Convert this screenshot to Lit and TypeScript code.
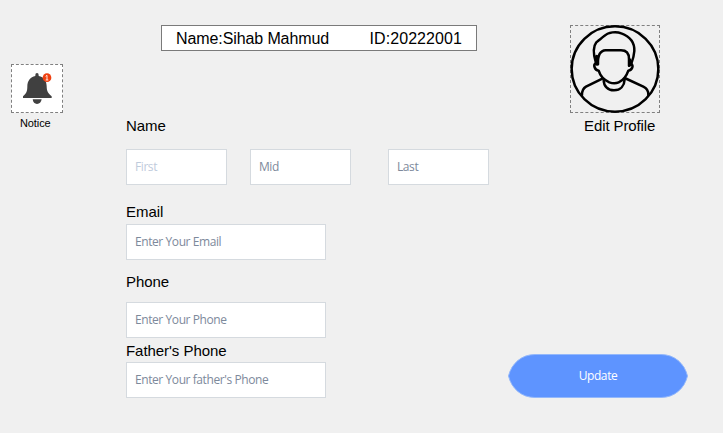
import { LitElement, html, css, svg } from "lit";
import { customElement, property } from "lit/decorators.js";

@customElement("text-field")
class TextField extends LitElement {
  @property() hint = "";

  static styles = css`
    :host {
      display: block;
      height: 36px;
    }
    .input {
      display: block;
      box-sizing: border-box;
      width: 100%;
      height: 36px;
      margin: 0;
      padding: 0 8px 1px;
      border: 1px solid #d5dadf;
      border-radius: 0;
      outline: 0;
      background: #fff;
      font: 12px "Open Sans", "Noto Sans", sans-serif;
      letter-spacing: -0.42px;
    }
    .input::placeholder {
      color: var(--hint-color, #7d899b);
      opacity: 1;
    }
  `;

  render() {
    return html`<input class="input" placeholder=${this.hint} aria-label=${this.hint} />`;
  }
}

const bell = svg`
  <path fill="#404040" d="M106 60 Q106 54 111 54 Q116 54 116 60 L116 63 C132 66 140 78 140 94 C140 110 145 116 155 124 L155 129 L69 129 L69 124 C79 116 82 110 82 94 C82 78 91 66 106 63 Z"/>
  <path fill="#404040" d="M98 133 H125 C123 142 119 147 111 147 C104 147 99 142 98 133 Z"/>
  <circle cx="141" cy="68" r="13" fill="#f04010"/>
  <path d="M137 64 L141 61 V75 M137 75 H145" fill="none" stroke="#fff" stroke-width="2.6"/>`;

const avatar = svg`
  <g fill="none" stroke="#000" stroke-width="7.5" stroke-linecap="round" stroke-linejoin="round">
    <ellipse cx="165" cy="162" rx="130" ry="128"/>
    <path d="M114 148 C113 125 117 107 137 106 H183 C201 106 207 116 207 132 V152"/>
    <path d="M108 144 C99 116 98 96 109 82 C118 74 123 71 130 65 C146 50 169 49 184 55 C211 65 224 84 223 108 C222 125 217 138 213 149"/>
    <path d="M108 144 C98 149 104 165 116 167 C121 184 134 196 148 202 C159 206 167 206 176 202 C190 196 200 182 205 167 C217 165 222 150 213 147"/>
    <path d="M110 124 V147" stroke-width="10"/>
    <path d="M209 135 V150" stroke-width="10"/>
    <path d="M127 191 L78 215 C69 220 66 226 66 240"/>
    <path d="M194 189 L250 215 C262 221 266 228 265 240"/>
    <path d="M131 194 C131 213 143 226 162 226 C182 226 193 212 194 193"/>
  </g>`;

@customElement("app-root")
class AppRoot extends LitElement {
  static styles = css`
    :host {
      display: grid;
      grid-template-columns: 126px 363px 1fr;
      box-sizing: border-box;
      width: 723px;
      height: 433px;
      overflow: hidden;
      background: #f0f0f0;
      color: #000;
      font: 15px/18px "Liberation Sans", Arial, sans-serif;
    }
    .notice {
      padding: 64px 0 0 11px;
      font-size: 11px;
    }
    .frame {
      display: block;
      box-sizing: border-box;
      border: 1px dashed #808080;
    }
    .frame svg {
      display: block;
      margin: -1px;
    }
    .notice .frame {
      width: 52px;
      height: 49px;
      background: #fff;
    }
    .caption {
      display: block;
      white-space: nowrap;
    }
    .notice .caption {
      margin: 1px 0 0 9px;
      letter-spacing: -0.1px;
    }
    .form {
      padding-top: 25px;
    }
    .identity {
      display: flex;
      justify-content: space-between;
      box-sizing: border-box;
      width: 316px;
      height: 26px;
      margin-left: 35px;
      padding: 0 14px;
      border: 1px solid #7a7a7a;
      background: #fff;
      font-size: 16px;
      line-height: 25px;
      white-space: nowrap;
    }
    .identity .name { letter-spacing: -0.1px; }
    .identity .number { letter-spacing: 0.08px; }
    .label {
      display: block;
      height: 18px;
      letter-spacing: -0.05px;
    }
    .first-label { margin: 66px 0 14px; }
    .names {
      display: grid;
      grid-template-columns: 101px 101px 101px;
      column-gap: 23px;
    }
    .names .last { margin-left: 14px; width: 101px; }
    .disabled { --hint-color: #bfcbdc; }
    .wide { width: 200px; }
    .email-label { margin: 18px 0 3px; }
    .phone-label { margin: 13px 0 11px; }
    .father-label { margin: 4px 0 2px; }
    .side {
      display: flex;
      flex-direction: column;
      padding: 25px 0 0 19px;
    }
    .profile { margin-left: 62px; }
    .profile .frame {
      width: 90px;
      height: 88px;
    }
    .profile .caption {
      margin: 4px 0 0 14px;
      letter-spacing: -0.1px;
    }
    .update {
      display: grid;
      width: 180px;
      height: 44px;
      margin-top: 219px;
      padding: 0;
      border: 0;
      background: none;
      color: #fff;
      font: 12px "Open Sans", "Noto Sans", sans-serif;
      letter-spacing: -0.4px;
      place-items: center;
    }
    .update > * { grid-area: 1 / 1; }
    .update .text { margin-bottom: 1px; z-index: 1; }
  `;

  render() {
    return html`
      <div class="notice">
        <div class="frame"><svg width="52" height="49" viewBox="33 27 156 147">${bell}</svg></div>
        <span class="caption">Notice</span>
      </div>
      <div class="form">
        <div class="identity">
          <span class="name">Name:Sihab Mahmud</span>
          <span class="number">ID:20222001</span>
        </div>
        <span class="label first-label">Name</span>
        <div class="names">
          <text-field class="disabled" hint="First"></text-field>
          <text-field hint="Mid"></text-field>
          <text-field class="last" hint="Last"></text-field>
        </div>
        <span class="label email-label">Email</span>
        <text-field class="wide" hint="Enter Your Email"></text-field>
        <span class="label phone-label">Phone</span>
        <text-field class="wide" hint="Enter Your Phone"></text-field>
        <span class="label father-label">Father's Phone</span>
        <text-field class="wide" hint="Enter Your father's Phone"></text-field>
      </div>
      <div class="side">
        <div class="profile">
          <div class="frame"><svg width="90" height="88" viewBox="30 30 270 264">${avatar}</svg></div>
          <span class="caption">Edit Profile</span>
        </div>
        <button class="update">
          <svg width="180" height="44" viewBox="0 0 180 44">
            <path d="M.5 22 C3.500 9.500 13.500 .5 27 .5 H153 C166.500 .5 176.500 9.500 179.500 22 C176.500 34.500 166.500 43.500 153 43.500 H27 C13.500 43.500 3.500 34.500 .5 22 Z" fill="#5e94ff" stroke="#94b8fb"/>
          </svg>
          <span class="text">Update</span>
        </button>
      </div>
    `;
  }
}
